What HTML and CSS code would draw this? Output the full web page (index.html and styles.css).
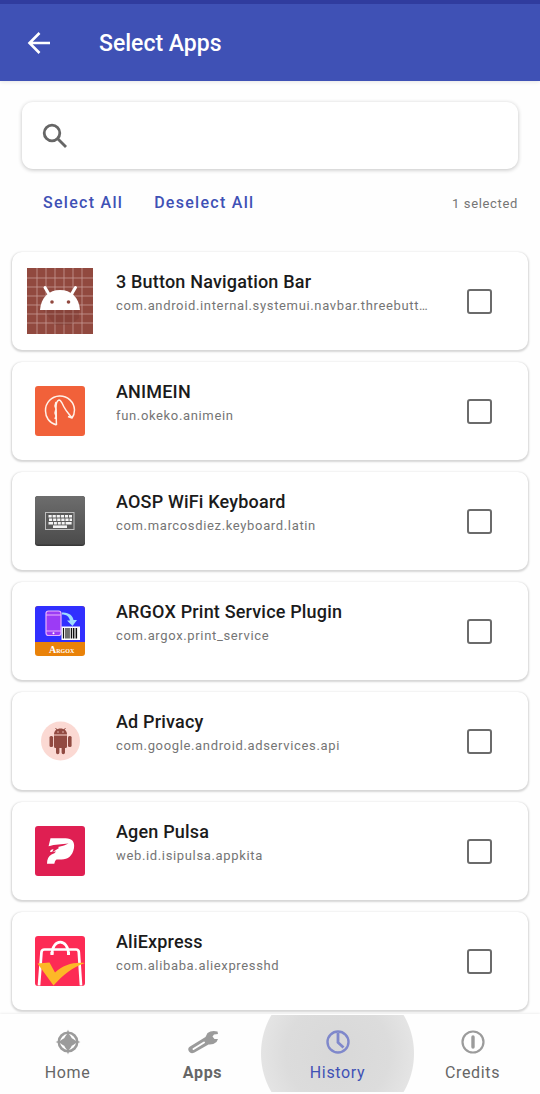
FILE: index.html
```html
<!DOCTYPE html>
<html lang="en">
<head>
<meta charset="utf-8">
<meta name="viewport" content="width=device-width, initial-scale=1">
<title>Select Apps</title>
<link rel="stylesheet" href="styles.css">
</head>
<body>
<header class="toolbar">
  <button class="back" type="button" aria-label="Back">
    <svg width="24" height="24" viewBox="0 0 24 24"><path d="M23 12H3M12.500 2L2.500 12l10 10" fill="none" stroke="#fff" stroke-width="2.600"/></svg>
  </button>
  <h1 class="toolbar-title">Select Apps</h1>
</header>

<main class="content">
  <label class="search">
    <svg width="26" height="26" viewBox="0 0 26 26" aria-hidden="true"><g fill="none" stroke="#666" stroke-width="2.800"><circle cx="10" cy="10" r="7.800"/><path d="M15.500 15.500L24 24"/></g></svg>
    <input class="search-input" type="text" aria-label="Search apps">
  </label>

  <div class="actions">
    <button class="text-button" type="button">Select All</button>
    <button class="text-button" type="button">Deselect All</button>
    <span class="count">1 selected</span>
  </div>

  <ul class="app-list">
    <li><label class="card">
      <svg class="app-icon" viewBox="0 0 66 66" aria-hidden="true">
        <rect width="66" height="66" fill="#91493f"/>
        <path d="M10 0V66M19 0V66M28 0V66M37 0V66M46 0V66M55 0V66M0 10H66M0 19H66M0 28H66M0 37H66M0 46H66M0 55H66" stroke="#c79b94" stroke-width=".8"/>
        <path d="M16 42H52V50L44 57H28Z" fill="#6e342d" opacity=".25"/>
        <path d="M13 42C14 29 22 22 33 22S52 29 53 42Z" fill="#fff"/>
        <path d="M18 19.500L22.500 27M48.500 19.500L44 27" stroke="#fff" stroke-width="3" stroke-linecap="round"/>
        <circle cx="25" cy="34" r="1.800" fill="#91493f"/><circle cx="41.500" cy="34" r="1.800" fill="#91493f"/>
      </svg>
      <span class="app-text"><span class="app-name">3 Button Navigation Bar</span><span class="app-package">com.android.internal.systemui.navbar.threebuttonnavigation</span></span>
      <input class="check" type="checkbox">
    </label></li>
    <li><label class="card">
      <svg class="app-icon" viewBox="0 0 66 66" aria-hidden="true">
        <rect x="8" y="8" width="50" height="50" rx="3" fill="#f1613a"/>
        <path d="M29.500 47C22 45 18.500 39 18.500 33A14.500 14.500 0 0 1 47.500 32C47.500 35 46.500 38 45 40L41 38.500M29.500 47C29 39 29.500 33 29 30C29 26 30 22.500 32 22C34 22 35 25 37 29C39 33 42 36 45 40M29 24L28 28L29 31L28 35L29 38L28 41" fill="none" stroke="#fff1e8" stroke-width="1.500" stroke-linejoin="round"/>
      </svg>
      <span class="app-text"><span class="app-name">ANIMEIN</span><span class="app-package">fun.okeko.animein</span></span>
      <input class="check" type="checkbox">
    </label></li>
    <li><label class="card">
      <svg class="app-icon" viewBox="0 0 66 66" aria-hidden="true">
        <defs><linearGradient id="key-bg" x1="0" y1="0" x2="0" y2="1"><stop offset="0" stop-color="#6d6d6d"/><stop offset="1" stop-color="#4b4b4b"/></linearGradient></defs>
        <rect x="8" y="8" width="50" height="50" rx="3" fill="#383838"/>
        <rect x="8" y="8" width="50" height="48.500" rx="3" fill="url(#key-bg)"/>
        <rect x="18.500" y="24.500" width="28.500" height="17" fill="#5a5a5a" stroke="#bdbdbd"/>
        <g stroke="#f4f4f4" stroke-width="2.600"><path d="M21.500 28.200H45" stroke-dasharray="3.200 .9"/><path d="M22 31.700H45" stroke-dasharray="3.200 .9"/><path d="M21.500 35.200H45" stroke-dasharray="4.500 .9 3 .9 3 .9 3 .9 6"/><path d="M26 38.700H40"/></g>
      </svg>
      <span class="app-text"><span class="app-name">AOSP WiFi Keyboard</span><span class="app-package">com.marcosdiez.keyboard.latin</span></span>
      <input class="check" type="checkbox">
    </label></li>
    <li><label class="card">
      <svg class="app-icon" viewBox="0 0 66 66" aria-hidden="true">
        <rect x="8" y="8" width="50" height="50" rx="3" fill="#e98209"/>
        <path d="M8 44V11a3 3 0 0 1 3-3H55a3 3 0 0 1 3 3V44Z" fill="#312fff"/>
        <rect x="19" y="13" width="15" height="24.500" rx="2.500" fill="#9c3bf5" stroke="#e9b2fc" stroke-width="1.200"/>
        <path d="M19 17H34M19 33H34" stroke="#e9b2fc"/><circle cx="26.500" cy="35.200" r="1" fill="#fff"/>
        <path d="M35 14.500C42 14 46 18 46.500 22H50L45.500 28L40 22.500H43C42 18.500 39.500 16.500 35 16.500Z" fill="#9edcff"/>
        <rect x="34.500" y="28.500" width="18.500" height="13.500" fill="#fff"/>
        <path d="M36.500 30V40.500M39 30V40.500M41 30V40.500M44.500 30V40.500M46.500 30V40.500M49.500 30V40.500" stroke="#111" stroke-width="1.200"/><path d="M42.700 30V40.500M48 30V40.500" stroke="#111" stroke-width=".7"/>
        <text class="argox" x="22" y="55">A<tspan class="argox-small">RGOX</tspan></text>
      </svg>
      <span class="app-text"><span class="app-name">ARGOX Print Service Plugin</span><span class="app-package">com.argox.print_service</span></span>
      <input class="check" type="checkbox">
    </label></li>
    <li><label class="card">
      <svg class="app-icon" viewBox="0 0 66 66" aria-hidden="true">
        <circle cx="33.500" cy="33" r="19.500" fill="#fbd9d3"/>
        <g fill="#914a41"><path d="M27 26.500C27 22.500 30 20.500 33.500 20.500S40 22.500 40 26.500Z"/><path d="M27 27.500H40V38.500a1.500 1.500 0 0 1-1.500 1.500H38V44.500a1.700 1.700 0 0 1-3.400 0V40H32.400V44.500a1.700 1.700 0 0 1-3.400 0V40H28.500a1.500 1.500 0 0 1-1.500-1.500Z"/><rect x="22.500" y="28" width="3.600" height="11" rx="1.500"/><rect x="41" y="28" width="3.600" height="11" rx="1.500"/></g>
        <path d="M30.500 22.500L28.500 20M36.500 22.500L38.500 20" stroke="#914a41"/><circle cx="31" cy="24" r=".7" fill="#fbd9d3"/><circle cx="36" cy="24" r=".7" fill="#fbd9d3"/>
      </svg>
      <span class="app-text"><span class="app-name">Ad Privacy</span><span class="app-package">com.google.android.adservices.api</span></span>
      <input class="check" type="checkbox">
    </label></li>
    <li><label class="card">
      <svg class="app-icon" viewBox="0 0 66 66" aria-hidden="true">
        <rect x="8" y="8" width="50" height="50" rx="3" fill="#df1f52"/>
        <path d="M23.500 20.300H38.500C45 20.300 48 24 47 30C45.500 38 41 41.300 34.500 41.600H29.500Q27.800 42.500 27.300 45.700H20C20 41 21.500 38 24.500 36.500Q28 35.500 29 33.500L23 34L25 28.500L21.500 28.500Z" fill="#fff"/>
        <path d="M21 28.500L26.500 27L41.500 25.500L37 27.500L31 29L32 30L25 34.500L26.500 31L21 33Z" fill="#df1f52"/>
      </svg>
      <span class="app-text"><span class="app-name">Agen Pulsa</span><span class="app-package">web.id.isipulsa.appkita</span></span>
      <input class="check" type="checkbox">
    </label></li>
    <li><label class="card">
      <svg class="app-icon" viewBox="0 0 66 66" aria-hidden="true">
        <rect x="8" y="8" width="50" height="50" rx="3" fill="#fd2b55"/>
        <path d="M12 57.500L14.500 24Q14.800 21.500 17.500 21.500H49Q51.500 21.500 51.800 24L54 57.500" fill="none" stroke="#fff" stroke-width="2.700"/>
        <path d="M25 26.500C25 10 41.500 10 41.500 26.500" fill="none" stroke="#fff" stroke-width="2.700"/>
        <path d="M23.500 25.500H26.500M40 25.500H43" stroke="#fff" stroke-width="3"/>
        <path d="M10.500 35.500L22.500 34.500L28 44.500C36 37 46 34 58 35C46 39 36 47 26.500 57.500Z" fill="#fdb827"/>
      </svg>
      <span class="app-text"><span class="app-name">AliExpress</span><span class="app-package">com.alibaba.aliexpresshd</span></span>
      <input class="check" type="checkbox">
    </label></li>
  </ul>
</main>

<nav class="bottom-nav">
  <a class="nav-item" href="#home">
    <svg class="nav-icon" viewBox="0 0 26 26" aria-hidden="true"><circle cx="13" cy="13" r="9.200" fill="none" stroke="#9b9b9b" stroke-width="2.600"/><path d="M13 .5L14.500 5H11.500ZM13 25.500L11.500 21H14.500ZM.5 13L5 11.500V14.500ZM25.500 13L21 14.500V11.500Z" fill="#9b9b9b"/><path d="M13 4L15.500 7L19 13L15.500 19L13 22L10.500 19L7 13L10.500 7ZM4 13L7 10.500L13 7L19 10.500L22 13L19 15.500L13 19L7 15.500Z" fill="#9b9b9b"/></svg>
    <span>Home</span>
  </a>
  <a class="nav-item nav-item-bold" href="#apps">
    <svg class="nav-icon nav-icon-wide" viewBox="0 0 32 26" aria-hidden="true"><path d="M18.500 8L20.500 4Q24.500 1 30.500 2.500L31 5L27 5.500L25.500 7.500L27.500 10L31 10L29.500 13Q26 16 21.500 15.500L7.500 23.500Q4 25.500 2 22.500T3 17.500Z" fill="#9b9b9b"/><path d="M6.500 20L17 13.500" stroke="#fefefe" stroke-width="2" stroke-linecap="round"/></svg>
    <span>Apps</span>
  </a>
  <a class="nav-item nav-item-active" href="#history" aria-current="page">
    <svg class="nav-icon" viewBox="0 0 26 26" aria-hidden="true"><g fill="none" stroke="#7f88cb"><circle cx="13" cy="13" r="10.500" stroke-width="2.400"/><path d="M13 4V13.500L18.500 18.500" stroke-width="2.800"/></g></svg>
    <span>History</span>
  </a>
  <a class="nav-item" href="#credits">
    <svg class="nav-icon" viewBox="0 0 26 26" aria-hidden="true"><circle cx="13" cy="13" r="10.500" fill="none" stroke="#9b9b9b" stroke-width="2.200"/><path d="M13 8V18" stroke="#9b9b9b" stroke-width="3.400" stroke-linecap="round"/></svg>
    <span>Credits</span>
  </a>
</nav>
</body>
</html>
```
FILE: styles.css
```css
* {
  box-sizing: border-box;
}

body {
  margin: 0;
  min-height: 100vh;
  display: flex;
  flex-direction: column;
  background: #fefefe;
  color: #1b1b1b;
  font-family: Roboto, sans-serif;
}

button {
  border: 0;
  padding: 0;
  background: none;
  font: inherit;
}

.toolbar {
  display: flex;
  align-items: center;
  gap: 48px;
  padding: 22px 27px 21px;
  border-top: 4px solid #303c9e;
  background: #3f51b5;
  box-shadow: 0 1px 4px rgba(0, 0, 0, 0.1);
  color: #fff;
}

.back {
  display: flex;
}

.toolbar-title {
  margin: 0;
  padding-top: 2px;
  font-size: 23px;
  line-height: 32px;
  font-weight: 500;
}

.content {
  flex: 1;
  padding: 21px 12px 4px;
}

.search {
  display: flex;
  align-items: center;
  gap: 16px;
  margin: 0 10px;
  padding: 20px;
  border-radius: 11px;
  background: #fff;
  box-shadow: 0 1px 4px rgba(0, 0, 0, 0.24);
}

.search-input {
  flex: 1;
  min-width: 0;
  height: 27px;
  border: 0;
  padding: 0;
  outline: 0;
  background: transparent;
  font: 18px Roboto, sans-serif;
}

.actions {
  display: flex;
  align-items: center;
  gap: 31px;
  padding: 22px 10px 37px 31px;
}

.text-button {
  color: #3f51b5;
  font-size: 16px;
  line-height: 24px;
  font-weight: 500;
  letter-spacing: 0.08em;
}

.count {
  margin-left: auto;
  color: #757575;
  font-size: 13px;
  letter-spacing: 0.05em;
}

.app-list {
  display: grid;
  grid-template-columns: minmax(0, 1fr);
  gap: 12px;
  margin: 0;
  padding: 0;
  list-style: none;
}

.card {
  display: flex;
  align-items: center;
  padding: 16px 36px 16px 15px;
  border-radius: 10px;
  background: #fff;
  box-shadow: 0 1px 2px 1px rgba(0, 0, 0, 0.16);
}

.app-icon {
  width: 66px;
  height: 66px;
  flex: none;
}

.argox {
  fill: #fff;
  font: bold 10px "Liberation Serif", serif;
}

.argox-small {
  font-size: 6px;
}

.app-text {
  flex: 1;
  align-self: flex-start;
  min-width: 0;
  margin: 2px 36px 0 23px;
}

.app-name,
.app-package {
  display: block;
  overflow: hidden;
  text-overflow: ellipsis;
  white-space: nowrap;
}

.app-name {
  font-size: 18px;
  line-height: 24px;
  font-weight: 500;
  letter-spacing: 0.01em;
}

.app-package {
  color: #757575;
  font-size: 13px;
  line-height: 24px;
  letter-spacing: 0.05em;
}

.check {
  appearance: none;
  flex: none;
  width: 25px;
  height: 25px;
  margin: 0;
  border: 2px solid #6b6b6b;
  border-radius: 3px;
}

.check:checked {
  background: #3f51b5;
}

.bottom-nav {
  display: grid;
  grid-template-columns: repeat(4, 1fr);
  padding: 1px 0 2px;
  background: #fefefe;
  box-shadow: 0 -1px 2px rgba(0, 0, 0, 0.06);
}

.nav-item {
  display: flex;
  flex-direction: column;
  align-items: center;
  gap: 6px;
  padding: 14px 0 7px;
  color: #666;
  font-size: 16px;
  line-height: 24px;
  letter-spacing: 0.04em;
  text-decoration: none;
}

.nav-item-bold {
  font-weight: 700;
}

.nav-item-active {
  margin: 0 -10px;
  background: radial-gradient(circle 77px, #d8d8d8 0, #dcdcdc 52px, #e4e4e4 76px, transparent 77px);
  color: #3f51b5;
}

.nav-icon {
  width: 26px;
  height: 26px;
}

.nav-icon-wide {
  width: 32px;
}
```
